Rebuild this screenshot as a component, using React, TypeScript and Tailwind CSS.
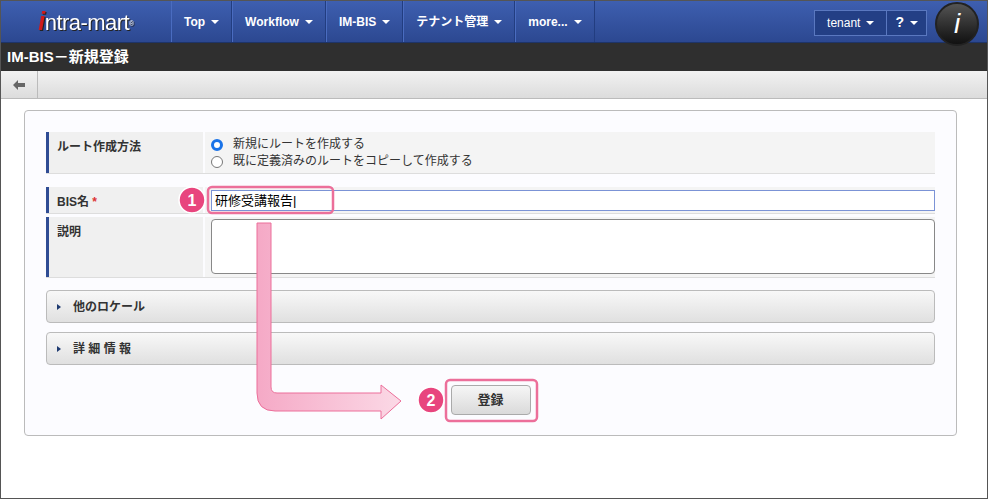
import React from "react";

const Caret = () => (
  <span className="inline-block w-0 h-0 ml-1.5 border-x-[4px] border-x-transparent border-t-[4px] border-t-white align-middle" />
);

const NavItem = ({ label }: { label: string }) => (
  <div className="h-full flex items-center px-[12px] border-l border-[#4a6cc0] border-r border-r-[#223d80] text-white font-bold text-[12px]">
    {label}
    <Caret />
  </div>
);

export default function App() {
  return (
    <div
      className="relative w-[988px] h-[499px] bg-white border border-[#555] overflow-hidden"
      style={{ fontFamily: '"Liberation Sans", "Noto Sans CJK JP", sans-serif' }}
    >
      {/* top nav */}
      <div className="h-[42px] flex items-center bg-gradient-to-b from-[#3e5fb0] to-[#2c4891] border-b border-[#1e3468]">
        <div className="w-[170px] h-full flex items-center justify-center">
          <span className="text-[22px] text-white font-['Liberation_Serif'] tracking-tight drop-shadow-[1px_1px_0_#222]">
            <span className="text-[#d01a1a] font-bold italic text-[25px]">i</span>ntra-mart
            <sup className="text-[7px]">®</sup>
          </span>
        </div>
        <NavItem label="Top" />
        <NavItem label="Workflow" />
        <NavItem label="IM-BIS" />
        <NavItem label="テナント管理" />
        <NavItem label="more..." />
        <div className="flex-1" />
        <div className="flex h-[26px] border border-[#5a78c0] bg-[#233f85] text-white text-[12px] mt-[2px]">
          <div className="flex items-center px-3 border-r border-[#5a78c0]">tenant<Caret /></div>
          <div className="flex items-center px-2 font-bold text-[14px]">?<Caret /></div>
        </div>
        <div className="w-[44px] h-[44px] ml-2 mr-2 mt-[4px] rounded-full bg-gradient-to-b from-[#555] to-[#111] border-2 border-[#222] flex items-center justify-center">
          <span className="text-white italic text-[28px] font-['Liberation_Serif']">i</span>
        </div>
      </div>
      {/* title */}
      <div className="h-[28px] bg-[#2f2f2f] flex items-center px-1.5 text-white font-bold text-[15px]">
        IM-BIS－新規登録
      </div>
      {/* toolbar */}
      <div className="h-[28px] bg-gradient-to-b from-[#f2f2f2] to-[#dcdcdc] border-b border-[#bbb] flex">
        <div className="w-[37px] border-r border-[#bbb] flex items-center justify-center">
          <svg width="12" height="10" viewBox="0 0 12 10">
            <path d="M0 5 L5 0 V3 H12 V7 H5 V10 Z" fill="#666" />
          </svg>
        </div>
      </div>

      {/* content panel */}
      <div className="ml-[23px] w-[933px] mt-[11px] h-[326px] border border-[#bbb] rounded bg-[#fcfcff] px-[21px] pt-[21px]">
        <div className="flex h-[42px] border-b border-[#ddd]">
          <div className="w-[157px] bg-[#f0f0f0] border-l-[3px] border-[#2f4c94] px-2 pt-1.5 font-bold text-[12px] text-[#333]">ルート作成方法</div>
          <div className="flex-1 bg-[#f4f4f4] ml-[2px] pl-[6px] pt-[4px] text-[12px] text-[#333] leading-[17px]">
            <label className="flex items-center gap-2.5">
              <span className="w-[12px] h-[12px] rounded-full border-[3.5px] border-[#1a73e8] bg-white" />新規にルートを作成する
            </label>
            <label className="flex items-center gap-2.5">
              <span className="w-[12px] h-[12px] rounded-full border border-[#777] bg-white" />既に定義済みのルートをコピーして作成する
            </label>
          </div>
        </div>
        <div className="flex h-[27px] mt-[13px] border-b border-[#ddd]">
          <div className="w-[157px] bg-[#f0f0f0] border-l-[3px] border-[#2f4c94] px-2 pt-1.5 font-bold text-[12px] text-[#333]">
            BIS名 <span className="text-[#d33]">*</span>
          </div>
          <div className="flex-1 ml-[2px] pl-[6px] pt-[3px] bg-[#f4f4f4]">
            <div className="h-[21px] border border-[#7b93d6] bg-white text-[13px] pl-[3px] leading-[19px]">研修受講報告|</div>
          </div>
        </div>
        <div className="flex h-[61px] mt-[3px] border-b border-[#ddd]">
          <div className="w-[157px] bg-[#f0f0f0] border-l-[3px] border-[#2f4c94] px-2 pt-1.5 font-bold text-[12px] text-[#333]">説明</div>
          <div className="flex-1 ml-[2px] pl-[6px] pt-[2px] pb-[3px] bg-[#f4f4f4]">
            <div className="h-full border border-[#888] rounded-sm bg-white" />
          </div>
        </div>
        {["他のロケール", "詳 細 情 報"].map((t, i) => (
          <div key={t} className={`h-[33px] ${i === 0 ? "mt-[12px]" : "mt-[9px]"} border border-[#bbb] rounded bg-gradient-to-b from-[#f8f8f8] to-[#e0e0e0] flex items-center px-2.5 gap-3 font-bold text-[12px] text-[#333]`}>
            <span className="w-0 h-0 border-y-[3.5px] border-y-transparent border-l-[4px] border-l-[#1e3a70]" />
            {t}
          </div>
        ))}
        <div className="flex justify-center mt-[20px]">
          <div className="w-[80px] h-[30px] border border-[#aaa] rounded bg-gradient-to-b from-[#f6f6f6] to-[#dadada] flex items-center justify-center font-bold text-[13px] text-[#333]">登録</div>
        </div>
      </div>

      {/* annotations */}
      <svg className="absolute left-0 top-0 pointer-events-none" width="988" height="499">
        <defs>
          <linearGradient id="pk" x1="0" y1="0" x2="1" y2="0">
            <stop offset="0" stopColor="#f5a9c6" />
            <stop offset="1" stopColor="#fbd9e6" />
          </linearGradient>
        </defs>
        <path d="M256 222 H270 V386 Q270 392 276 392 H380 V384 L400 400 L380 418 V410 H274 Q256 410 256 392 Z" fill="url(#pk)" stroke="#ec6f9a" strokeWidth="1" />
        <rect x="207" y="186" width="125" height="26" rx="4" fill="none" stroke="#ec6f9a" strokeWidth="2.5" />
        <rect x="445" y="379" width="91" height="41" rx="4" fill="none" stroke="#ec6f9a" strokeWidth="2.5" />
        <circle cx="191" cy="199" r="13" fill="#e8457e" stroke="#fff" strokeWidth="1.5" />
        <text x="191" y="205" textAnchor="middle" fill="#fff" fontSize="16" fontWeight="bold" fontFamily="Liberation Sans, sans-serif">1</text>
        <circle cx="430" cy="399" r="13" fill="#e8457e" stroke="#fff" strokeWidth="1.5" />
        <text x="430" y="405" textAnchor="middle" fill="#fff" fontSize="16" fontWeight="bold" fontFamily="Liberation Sans, sans-serif">2</text>
      </svg>
    </div>
  );
}
